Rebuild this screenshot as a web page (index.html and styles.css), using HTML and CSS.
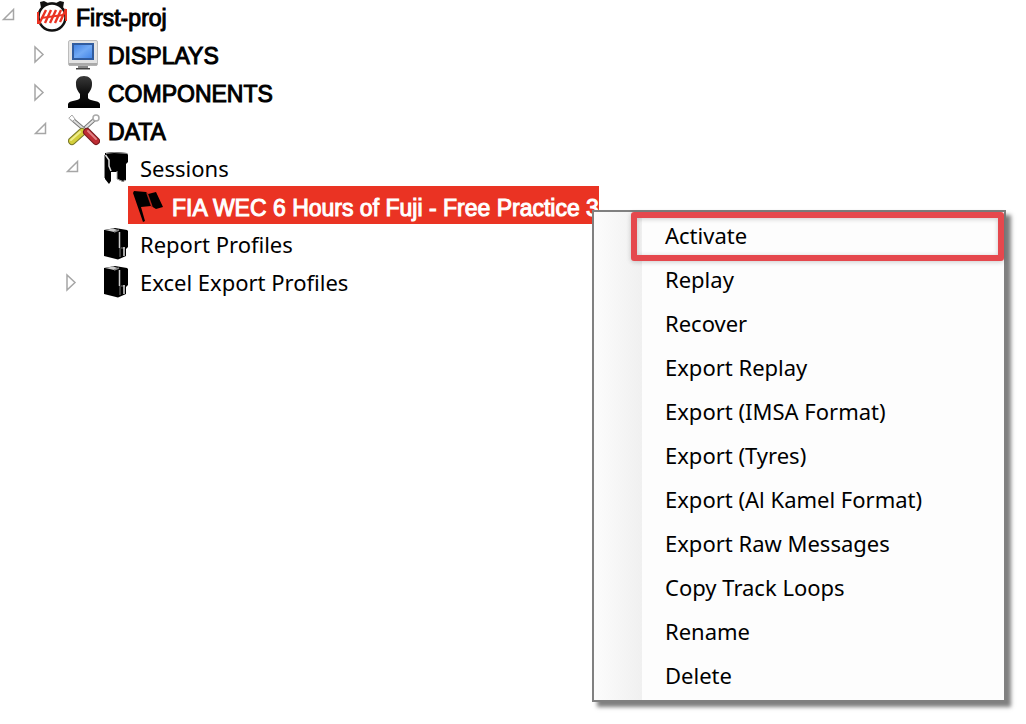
FILE: index.html
```html
<!DOCTYPE html>
<html lang="en">
<head>
  <meta charset="UTF-8">
  <title>First-proj</title>
  <meta name="viewport" content="width=device-width, initial-scale=1.0">
  <link rel="stylesheet" href="styles.css">
</head>
<body>
  <!-- shared shapes -->
  <svg class="defs" aria-hidden="true">
    <linearGradient id="screen" x1="0" y1="0" x2="1" y2="1">
      <stop offset="0" stop-color="#3f7fe0"/>
      <stop offset="0.5" stop-color="#72aaf5"/>
      <stop offset="1" stop-color="#3f82e6"/>
    </linearGradient>
    <linearGradient id="person" x1="0" y1="0" x2="0" y2="1">
      <stop offset="0" stop-color="#3a3a3a"/>
      <stop offset="0.5" stop-color="#111"/>
      <stop offset="1" stop-color="#000"/>
    </linearGradient>
    <symbol id="expanded" viewBox="0 0 32 32"><path d="M3.5 19.5H13.5V9.5Z" fill="#fff" stroke="#a6a6a6" stroke-width="1.5"/></symbol>
    <symbol id="collapsed" viewBox="0 0 32 32"><path d="M3 9V24L11 16.500Z" fill="#fff" stroke="#a6a6a6" stroke-width="1.500"/></symbol>
    <symbol id="folder" viewBox="0 0 32 32">
      <path d="M4 2L15 0L27 2L28 3V19L26 21V28L18 31.500L4 28Z" fill="#000"/>
      <path d="M5 2L13 0.500L18 2L14 4Z" fill="#ccc"/>
      <path d="M14 4L19 2" stroke="#888" stroke-width="1.500"/>
      <path d="M19.500 4V20" stroke="#ccc" stroke-width="1.500"/>
      <path d="M21 20H25" stroke="#777" stroke-width="1"/>
      <path d="M24 19V28" stroke="#ddd" stroke-width="1.500"/>
      <path d="M20 20V29" stroke="#777" stroke-width="1"/>
    </symbol>
  </svg>

  <ul class="tree" role="tree">
    <li class="row" role="treeitem">
      <button class="toggle" aria-label="Collapse First-proj"><svg><use href="#expanded"/></svg></button>
      <a class="node root" href="#">
        <svg viewBox="0 0 32 32">
          <path d="M5 8L4 2L8 1L12 3Q16 2 20 3L24 1L28 2L27 8Z" fill="#111"/>
          <circle cx="16" cy="17" r="13.500" fill="#fff" stroke="#111" stroke-width="2.500"/>
          <path d="M2 12V24M30 9V21" fill="none" stroke="#ea3323" stroke-width="2"/>
          <path d="M3 24L10 10M9 23L15 10M14 23L20 10M19 23L25 10M24 22L30 9" fill="none" stroke="#ea3323" stroke-width="2.400"/>
          <path d="M5 18L27 15" fill="none" stroke="#ea3323" stroke-width="2"/>
        </svg>
        <span>First-proj</span>
      </a>
    </li>
    <li class="row level-1" role="treeitem">
      <button class="toggle" aria-label="Expand DISPLAYS"><svg><use href="#collapsed"/></svg></button>
      <a class="node group" href="#">
        <svg viewBox="0 0 32 32">
          <rect x="0.500" y="2.500" width="29" height="25" rx="1.500" fill="#e4e4e4" stroke="#bcbcbc"/>
          <path d="M1 25H29V27.500H1Z" fill="#aaa"/>
          <rect x="5" y="6" width="20" height="15" fill="url(#screen)" stroke="#315c9e" stroke-width="2"/>
          <path d="M10 28H20V30H10Z" fill="#888"/>
          <path d="M8 30H22V31.500H8Z" fill="#444"/>
        </svg>
        <span>DISPLAYS</span>
      </a>
    </li>
    <li class="row level-1" role="treeitem">
      <button class="toggle" aria-label="Expand COMPONENTS"><svg><use href="#collapsed"/></svg></button>
      <a class="node group" href="#">
        <svg viewBox="0 0 32 32">
          <path d="M16 0C21 0 24.500 3 24 8C24 13 22 15 20 18V22C21 25 31 24 32 28V32H0V28C1 24 11 25 12 22V18C10 15 8 13 8 8C7.500 3 11 0 16 0Z" fill="url(#person)"/>
        </svg>
        <span>COMPONENTS</span>
      </a>
    </li>
    <li class="row level-1" role="treeitem">
      <button class="toggle" aria-label="Collapse DATA"><svg><use href="#expanded"/></svg></button>
      <a class="node group" href="#">
        <svg viewBox="0 0 32 32" fill="none" stroke-linecap="round">
          <path d="M27 5L16 15" stroke="#777" stroke-width="4"/>
          <path d="M27 5L16 15" stroke="#e2e2e2" stroke-width="2"/>
          <circle cx="28" cy="4" r="3" fill="#fff" stroke="#aaa" stroke-width="1.500"/>
          <path d="M4 5L18 17" stroke="#777" stroke-width="4"/>
          <path d="M4 5L18 17" stroke="#ddd" stroke-width="2"/>
          <path d="M1 4L4 1L7 5L5 7Z" fill="#fff" stroke="#aaa"/>
          <path d="M14 18L4 27" stroke="#77762a" stroke-width="8"/>
          <path d="M14 18L4 27" stroke="#d3ce3b" stroke-width="6"/>
          <path d="M12 18L3 26" stroke="#f0ee8c" stroke-width="2"/>
          <path d="M19 18L28 27" stroke="#751a1d" stroke-width="8"/>
          <path d="M19 18L28 27" stroke="#bd2c33" stroke-width="6"/>
          <path d="M20 17L28 25" stroke="#e28084" stroke-width="2"/>
        </svg>
        <span>DATA</span>
      </a>
    </li>
    <li class="row level-2" role="treeitem">
      <button class="toggle" aria-label="Collapse Sessions"><svg><use href="#expanded"/></svg></button>
      <a class="node" href="#">
        <svg viewBox="0 0 32 32">
          <path d="M5 1L14 0L27 1L28 3V10L26 12V28L23 30L17 27V20H11V29L9 32L5 27Z" fill="#000"/>
          <path d="M17 19V27L23 29.500L25 28" fill="none" stroke="#aaa" stroke-width="1"/>
          <path d="M6 1.500L14 0.500L27 1.500" fill="none" stroke="#888" stroke-width="1"/>
          <path d="M5.500 3L9 8V14L11 19" fill="none" stroke="#ddd" stroke-width="1.500"/>
          <path d="M4.500 3V26" stroke="#888" stroke-width="1"/>
        </svg>
        <span>Sessions</span>
      </a>
    </li>
    <li class="row level-3" role="treeitem" aria-selected="true">
      <span class="toggle"></span>
      <a class="node session selected" href="#">
        <svg viewBox="0 0 32 32">
          <path d="M2 1L14 2L16 4L24 2L31 17L24 19L19 16L9 17L13 31L11 32L1 3Z" fill="#000"/>
          <path d="M15 3L20 17" stroke="#b52419" stroke-width="1.500"/>
        </svg>
        <span>FIA WEC 6 Hours of Fuji - Free Practice 3</span>
      </a>
    </li>
    <li class="row level-2" role="treeitem">
      <span class="toggle"></span>
      <a class="node" href="#"><svg><use href="#folder"/></svg><span>Report Profiles</span></a>
    </li>
    <li class="row level-2" role="treeitem">
      <button class="toggle" aria-label="Expand Excel Export Profiles"><svg><use href="#collapsed"/></svg></button>
      <a class="node" href="#"><svg><use href="#folder"/></svg><span>Excel Export Profiles</span></a>
    </li>
  </ul>

  <!-- context menu of the selected session -->
  <div class="menu" role="menu">
    <button class="menu-item active" role="menuitem">Activate</button>
    <button class="menu-item" role="menuitem">Replay</button>
    <button class="menu-item" role="menuitem">Recover</button>
    <button class="menu-item" role="menuitem">Export Replay</button>
    <button class="menu-item" role="menuitem">Export (IMSA Format)</button>
    <button class="menu-item" role="menuitem">Export (Tyres)</button>
    <button class="menu-item" role="menuitem">Export (Al Kamel Format)</button>
    <button class="menu-item" role="menuitem">Export Raw Messages</button>
    <button class="menu-item" role="menuitem">Copy Track Loops</button>
    <button class="menu-item" role="menuitem">Rename</button>
    <button class="menu-item" role="menuitem">Delete</button>
  </div>
</body>
</html>
```
FILE: styles.css
```css
* {
  box-sizing: border-box;
}

body {
  margin: 0;
  background-color: #fff;
  color: #000;
  font-family: "Noto Sans", "Open Sans", sans-serif;
  font-size: 22px;
}

button {
  border: none;
  background: none;
  padding: 0;
  color: inherit;
  font: inherit;
  cursor: pointer;
}

.defs {
  position: absolute;
  width: 0;
  height: 0;
}

/* tree */
.tree {
  list-style: none;
  margin: -4px 0 0;
  padding: 0;
}

.row {
  display: flex;
  height: 38px;
}

.level-1 {
  padding-left: 32px;
}

.level-2 {
  padding-left: 64px;
}

.level-3 {
  padding-left: 96px;
}

.toggle {
  display: flex;
  align-items: center;
  width: 32px;
  padding-top: 2px;
}

.toggle svg,
.node svg {
  width: 32px;
  height: 32px;
  flex: none;
}

.node {
  display: flex;
  align-items: center;
  gap: 8px;
  padding: 2px 0 0 4px;
  color: #000;
  text-decoration: none;
  white-space: nowrap;
}

/* regular face thickened by a stroke, narrower than the real bold */
.root,
.group,
.session {
  font-family: "Liberation Sans", Arial, sans-serif;
  font-size: 23px;
  -webkit-text-stroke: 1px currentColor;
}

.root span,
.group span,
.session span {
  padding-top: 4px;
}

.selected {
  background-color: #ea3323;
  color: #fff;
}

/* context menu */
.menu {
  position: absolute;
  top: 210px;
  left: 592px;
  width: 414px;
  padding: 2px 0;
  border: 2px solid #808080;
  background: linear-gradient(to right, #fcfcfc, #f0f0f0) no-repeat 0 0 / 48px 100%, #fdfdfd;
  box-shadow: 5px 5px 4px rgba(0, 0, 0, 0.5);
}

.menu-item {
  display: block;
  width: 100%;
  height: 44px;
  padding: 0 0 2px 71px;
  text-align: left;
}

.active {
  position: relative;
}

.active::after {
  content: "";
  position: absolute;
  top: -2px;
  right: 0;
  bottom: -3px;
  left: 37px;
  border: 6px solid #e5484d;
  border-radius: 3px;
  box-shadow: 0 1px 5px rgba(0, 0, 0, 0.2), inset 0 1px 5px rgba(0, 0, 0, 0.2);
}
```
